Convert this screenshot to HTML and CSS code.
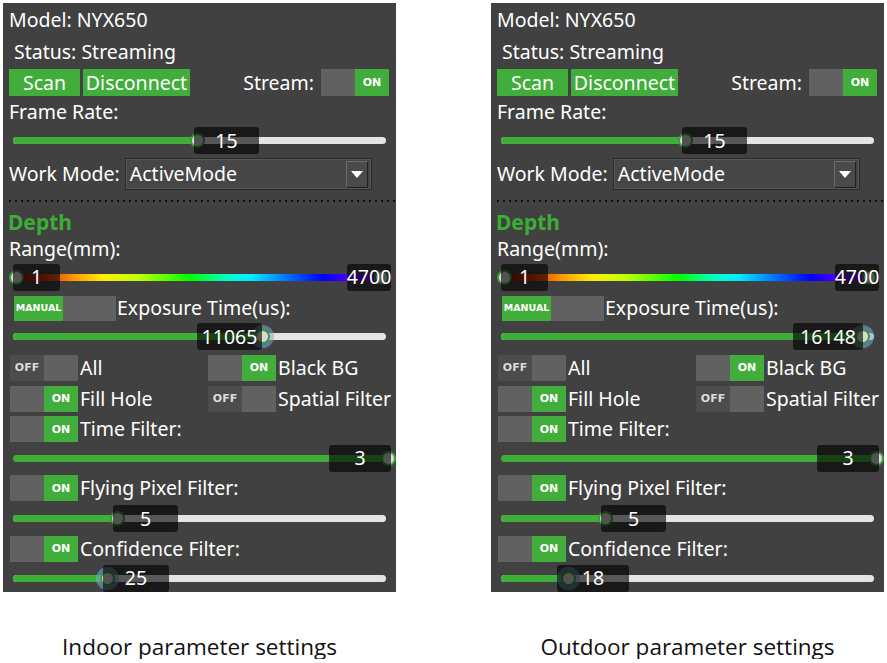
FILE: index.html
```html
<!DOCTYPE html>
<html>
<head>
<meta charset="utf-8">
<link rel="stylesheet" href="styles.css">
</head>
<body>
<div class="page">
  <div class="col">
    <div class="panel">
      <div class="row r-model"><span>Model: NYX650</span></div>
      <div class="row r-status"><span>Status: Streaming</span></div>
      <div class="row r-buttons">
        <button class="btn btn-scan">Scan</button>
        <button class="btn btn-disc">Disconnect</button>
        <span class="stream-lbl">Stream:</span>
        <div class="tog on tog-stream"><span class="half"></span><span class="lbl">ON</span></div>
      </div>
      <div class="row r-label"><span>Frame Rate:</span></div>
      <div class="row r-slider h31">
        <div class="track"><div class="fill" style="width:184px"></div></div>
        <div class="knob" style="left:194px"></div>
        <div class="val" style="left:191px;width:65px">15</div>
      </div>
      <div class="row r-mode">
        <span>Work Mode:</span>
        <div class="combo"><span class="combo-text">ActiveMode</span><span class="combo-btn"><span class="tri"></span></span></div>
      </div>
      <div class="row r-dots"><div class="dots"></div></div>
      <div class="row r-depth"><span>Depth</span></div>
      <div class="row r-range-lbl"><span>Range(mm):</span></div>
      <div class="row r-slider h36">
        <div class="track rainbow"></div>
        <div class="knob knob-light" style="left:13px"></div>
        <div class="knob knob-light" style="left:378px"></div>
        <div class="val" style="left:10px;width:47px">1</div>
        <div class="val" style="left:344px;width:44px">4700</div>
      </div>
      <div class="row r-manual">
        <div class="tog on tog-manual"><span class="lbl">MANUAL</span><span class="half"></span></div>
        <span class="tlbl">Exposure Time(us):</span>
      </div>
      <div class="row r-slider h31">
        <div class="track"><div class="fill" style="width:249px"></div></div>
        <div class="knob halo" style="left:259px"></div>
        <div class="val" style="left:194px;width:65px">11065</div>
      </div>
      <div class="grid2">
        <div class="trow"><div class="tog off"><span class="lbl">OFF</span><span class="half"></span></div><span class="tlbl">All</span></div>
        <div class="trow"><div class="tog on"><span class="half"></span><span class="lbl">ON</span></div><span class="tlbl">Black BG</span></div>
        <div class="trow"><div class="tog on"><span class="half"></span><span class="lbl">ON</span></div><span class="tlbl">Fill Hole</span></div>
        <div class="trow"><div class="tog off"><span class="lbl">OFF</span><span class="half"></span></div><span class="tlbl">Spatial Filter</span></div>
      </div>
      <div class="row r-tog h30"><div class="tog on"><span class="half"></span><span class="lbl">ON</span></div><span class="tlbl">Time Filter:</span></div>
      <div class="row r-slider h28">
        <div class="track"><div class="fill" style="width:377px"></div></div>
        <div class="knob" style="left:385px"></div>
        <div class="val" style="left:326px;width:62px">3</div>
      </div>
      <div class="row r-tog h32"><div class="tog on"><span class="half"></span><span class="lbl">ON</span></div><span class="tlbl">Flying Pixel Filter:</span></div>
      <div class="row r-slider h29">
        <div class="track"><div class="fill" style="width:104px"></div></div>
        <div class="knob" style="left:114px"></div>
        <div class="val" style="left:110px;width:65px">5</div>
      </div>
      <div class="row r-tog h31"><div class="tog on"><span class="half"></span><span class="lbl">ON</span></div><span class="tlbl">Confidence Filter:</span></div>
      <div class="row r-slider h28">
        <div class="track"><div class="fill" style="width:94px"></div></div>
        <div class="knob halo" style="left:104px"></div>
        <div class="val" style="left:100px;width:66px">25</div>
      </div>
    </div>
    <div class="caption">Indoor parameter settings</div>
  </div>

  <div class="col">
    <div class="panel">
      <div class="row r-model"><span>Model: NYX650</span></div>
      <div class="row r-status"><span>Status: Streaming</span></div>
      <div class="row r-buttons">
        <button class="btn btn-scan">Scan</button>
        <button class="btn btn-disc">Disconnect</button>
        <span class="stream-lbl">Stream:</span>
        <div class="tog on tog-stream"><span class="half"></span><span class="lbl">ON</span></div>
      </div>
      <div class="row r-label"><span>Frame Rate:</span></div>
      <div class="row r-slider h31">
        <div class="track"><div class="fill" style="width:184px"></div></div>
        <div class="knob" style="left:194px"></div>
        <div class="val" style="left:191px;width:65px">15</div>
      </div>
      <div class="row r-mode">
        <span>Work Mode:</span>
        <div class="combo"><span class="combo-text">ActiveMode</span><span class="combo-btn"><span class="tri"></span></span></div>
      </div>
      <div class="row r-dots"><div class="dots"></div></div>
      <div class="row r-depth"><span>Depth</span></div>
      <div class="row r-range-lbl"><span>Range(mm):</span></div>
      <div class="row r-slider h36">
        <div class="track rainbow"></div>
        <div class="knob knob-light" style="left:13px"></div>
        <div class="knob knob-light" style="left:378px"></div>
        <div class="val" style="left:10px;width:47px">1</div>
        <div class="val" style="left:344px;width:44px">4700</div>
      </div>
      <div class="row r-manual">
        <div class="tog on tog-manual"><span class="lbl">MANUAL</span><span class="half"></span></div>
        <span class="tlbl">Exposure Time(us):</span>
      </div>
      <div class="row r-slider h31">
        <div class="track"><div class="fill" style="width:361px"></div></div>
        <div class="knob halo" style="left:371px"></div>
        <div class="val" style="left:302px;width:70px">16148</div>
      </div>
      <div class="grid2">
        <div class="trow"><div class="tog off"><span class="lbl">OFF</span><span class="half"></span></div><span class="tlbl">All</span></div>
        <div class="trow"><div class="tog on"><span class="half"></span><span class="lbl">ON</span></div><span class="tlbl">Black BG</span></div>
        <div class="trow"><div class="tog on"><span class="half"></span><span class="lbl">ON</span></div><span class="tlbl">Fill Hole</span></div>
        <div class="trow"><div class="tog off"><span class="lbl">OFF</span><span class="half"></span></div><span class="tlbl">Spatial Filter</span></div>
      </div>
      <div class="row r-tog h30"><div class="tog on"><span class="half"></span><span class="lbl">ON</span></div><span class="tlbl">Time Filter:</span></div>
      <div class="row r-slider h28">
        <div class="track"><div class="fill" style="width:377px"></div></div>
        <div class="knob" style="left:385px"></div>
        <div class="val" style="left:326px;width:62px">3</div>
      </div>
      <div class="row r-tog h32"><div class="tog on"><span class="half"></span><span class="lbl">ON</span></div><span class="tlbl">Flying Pixel Filter:</span></div>
      <div class="row r-slider h29">
        <div class="track"><div class="fill" style="width:104px"></div></div>
        <div class="knob" style="left:114px"></div>
        <div class="val" style="left:110px;width:65px">5</div>
      </div>
      <div class="row r-tog h31"><div class="tog on"><span class="half"></span><span class="lbl">ON</span></div><span class="tlbl">Confidence Filter:</span></div>
      <div class="row r-slider h28">
        <div class="track"><div class="fill" style="width:67px"></div></div>
        <div class="knob halo" style="left:77px"></div>
        <div class="val" style="left:66px;width:72px">18</div>
      </div>
    </div>
    <div class="caption">Outdoor parameter settings</div>
  </div>
</div>
</body>
</html>
```
FILE: styles.css
```css
* { box-sizing: border-box; }
html, body { margin: 0; padding: 0; background: #ffffff; }
body { font-family: "Noto Sans", "Open Sans", sans-serif; }

.page {
  display: flex;
  gap: 95px;
  padding: 3px 0 0 3px;
}
.col { display: flex; flex-direction: column; width: 393px; }

.panel {
  width: 393px;
  height: 589px;
  background: #414141;
  color: #ffffff;
  font-size: 19.5px;
  display: flex;
  flex-direction: column;
  overflow: hidden;
}

.row {
  display: flex;
  align-items: center;
  padding-left: 6px;
  position: relative;
  line-height: 1;
  flex: none;
}
.row > span, .tlbl, .combo-text { display: block; line-height: 1; white-space: nowrap; }
.r-model { height: 33px; }
.r-status { height: 31px; padding-left: 11px; }
.r-buttons { height: 31px; gap: 3px; }
.r-label { height: 27px; }
.r-mode { height: 36px; gap: 5px; }
.r-dots { height: 18px; padding-left: 6px; }
.r-depth { height: 26px; padding-left: 5px; color: #3cae35; font-weight: bold; font-size: 21px; align-items: flex-start; padding-top: 2px; }
.r-range-lbl { height: 23px; align-items: flex-end; padding-bottom: 1px; }
.r-manual { height: 26px; padding-left: 11px; gap: 1px; }
.h28 { height: 28px; }
.h29 { height: 29px; }
.h30 { height: 30px; }
.h31 { height: 31px; }
.h32 { height: 32px; }
.h36 { height: 36px; }
.r-tog { padding-left: 7px; gap: 2px; }

.btn {
  font: inherit;
  color: #ffffff;
  background: #41ad3a;
  border: none;
  height: 27px;
  padding: 0;
  line-height: 1;
}
.btn-scan { width: 71px; }
.btn-disc { width: 107px; }
.row > .stream-lbl { margin-left: auto; margin-right: 4px; }

.tog {
  display: flex;
  width: 68px;
  height: 26px;
  flex: none;
}
.tog > span { flex: 1; }
.tog .half { background: #616161; }
.tog .lbl {
  display: flex;
  align-items: center;
  justify-content: center;
  font-family: "DejaVu Sans", "Noto Sans", sans-serif;
  font-size: 11px;
  font-weight: bold;
}
.tog.on .lbl { background: #41ad3a; color: #ffffff; }
.tog.off .lbl { background: #4b4c4b; color: #dcdcdc; }
.tog-stream { width: 68px; height: 27px; margin-right: 7px; }
.tog-manual { width: 102px; height: 25px; }
.tog-manual .lbl { flex: 0 0 49px; font-size: 9.5px; }

.grid2 {
  display: grid;
  grid-template-columns: 198px 1fr;
  grid-auto-rows: 31px;
  padding-left: 7px;
  flex: none;
}
.trow { display: flex; align-items: center; gap: 2px; line-height: 1; }

.track {
  position: absolute;
  left: 10px;
  width: 373px;
  top: 50%;
  height: 7px;
  margin-top: -3.5px;
  background: #e4e4e4;
  border-radius: 4px;
  overflow: hidden;
}
.fill { height: 100%; background: #3fae38; }
.rainbow {
  width: 378px;
  border-radius: 0;
  background: linear-gradient(to right, #7a0000 0%, #d83000 8%, #ff9900 16%, #ffee00 24%, #c0ff00 33%, #00ff00 47%, #00ffcc 57%, #00eaff 63%, #0060ff 74%, #0000ff 82%, #7000ff 92%, #8000ff 100%);
}
.knob {
  position: absolute;
  top: 50%;
  width: 15px;
  height: 15px;
  margin: -7.5px 0 0 -7.5px;
  border-radius: 50%;
  border: 2px solid #3a9f33;
  background: #d8d8d8;
}
.knob.halo { box-shadow: 0 0 0 4px rgba(120, 170, 220, 0.55); }
.val {
  position: absolute;
  top: 50%;
  height: 27px;
  margin-top: -13.5px;
  background: rgba(0, 0, 0, 0.62);
  border-radius: 3px;
  color: #ffffff;
  display: flex;
  align-items: center;
  justify-content: center;
  font-size: 19.5px;
  line-height: 1;
  white-space: nowrap;
}

.combo {
  width: 247px;
  height: 32px;
  background: #464646;
  border: 1px solid #2b2b2b;
  box-shadow: inset 0 0 0 1px #575757;
  display: flex;
  align-items: center;
  padding: 0 3px 0 4px;
}
.combo-text { flex: 1; }
.combo-btn {
  width: 22px;
  height: 27px;
  background: #4a4a4a;
  border-top: 1px solid #6a6a6a;
  border-left: 1px solid #6a6a6a;
  border-right: 1px solid #222;
  border-bottom: 1px solid #222;
  display: flex;
  align-items: center;
  justify-content: center;
}
.tri {
  width: 0;
  height: 0;
  border-left: 6px solid transparent;
  border-right: 6px solid transparent;
  border-top: 7px solid #ffffff;
}
.dots {
  width: 387px;
  height: 2px;
  margin-top: -1px;
  background-image: linear-gradient(to right, #111 2px, transparent 2px);
  background-size: 6px 2px;
}

.caption {
  margin-top: 43px;
  text-align: center;
  font-size: 22.5px;
  line-height: 24px;
  color: #111;
  font-family: "Open Sans", "Noto Sans", sans-serif;
}
```
